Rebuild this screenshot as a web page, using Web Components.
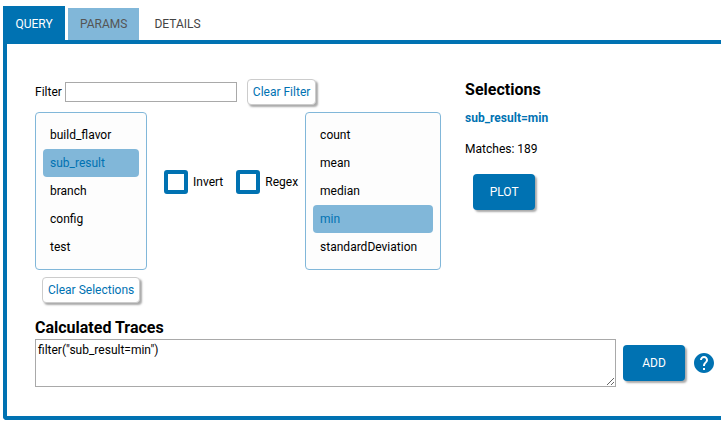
<!DOCTYPE html>
<html lang="en">
<head>
<meta charset="utf-8">
<title>Query</title>
<style>
  :root { --primary: #0072b2; --light: #81b7d9; --outline: #a9a9a9; }
  body { margin: 0; padding: 6px 0 0 3px; background: #fff; color: #000; font: 12px/16px Roboto, "Liberation Sans", sans-serif; }
</style>
</head>
<body>
<query-dialog></query-dialog>

<script>
  const define = (name, html, setup) => {
    const template = document.createElement('template');
    template.innerHTML = '<style>*,*::before{box-sizing:border-box}:host{display:block;box-sizing:border-box}</style>' + html;
    customElements.define(name, class extends HTMLElement {
      constructor() {
        super();
        this.attachShadow({ mode: 'open' }).append(template.content.cloneNode(true));
      }
      connectedCallback() { if (setup) setup(this, this.shadowRoot); }
    });
  };

  define('action-button', `
    <style>
      :host { display: inline-block; flex: none; }
      button { display: block; font: inherit; color: var(--primary); background: #fff; border: 1px solid #ccc;
        border-radius: 4px; padding: 4px 5px; height: 26px; cursor: pointer; box-shadow: 2px 2px 2px #aaa; }
      :host([primary]) button { color: #fff; background: var(--primary); border: 0; height: 36px; min-width: 62px; padding: 0 16px; }
    </style>
    <button type="button"><slot></slot></button>`);

  define('tab-bar', `
    <style>
      :host { display: flex; align-items: flex-end; gap: 3px; height: 34px; }
    </style>
    <slot></slot>`);

  define('tab-item', `
    <style>
      button { display: block; font: inherit; height: 32px; padding: 0 12px; border: 0; background: #fff; color: #444; }
      :host([near]) button { background: var(--light); color: #555; }
      :host([active]) button { height: 34px; min-width: 62px; padding-top: 2px; background: var(--primary); color: #fff; }
    </style>
    <button type="button" role="tab"><slot></slot></button>`,
    (host, root) => root.querySelector('button').setAttribute('aria-selected', host.hasAttribute('active')));

  define('filter-field', `
    <style>
      :host { display: flex; align-items: center; gap: 3px; }
      input { width: 172px; height: 20px; padding: 1px 3px; font: inherit; border: 1px solid var(--outline); background: #fff; outline: 0; }
    </style>
    <label for="filter">Filter</label><input id="filter" type="text">`);

  define('check-field', `
    <style>
      label { display: flex; align-items: center; gap: 5px; }
      input { appearance: none; margin: 0; width: 24px; height: 24px; border: 4px solid var(--primary); border-radius: 3px; background: #fff; }
      input:checked { background: var(--light); }
    </style>
    <label><input type="checkbox"><slot></slot></label>`);

  define('select-list', `
    <style>
      :host { border: 1px solid var(--light); border-radius: 4px; padding: 8px 7px; background: #fdfdfd; }
    </style>
    <slot></slot>`, host => host.setAttribute('role', 'listbox'));

  define('list-option', `
    <style>
      :host { padding: 6px 7px; border-radius: 4px; cursor: pointer; }
      :host([selected]) { background: var(--light); color: var(--primary); }
    </style>
    <slot></slot>`, host => {
      host.setAttribute('role', 'option');
      host.setAttribute('aria-selected', host.hasAttribute('selected'));
    });

  define('query-picker', `
    <style>
      .filter { display: flex; align-items: center; gap: 10px; }
      .lists { display: flex; align-items: stretch; margin: 7px 0; }
      .keys { width: 112px; }
      .values { width: 136px; }
      .checks { display: flex; align-items: center; gap: 13px; padding: 0 7px 18px 17px; }
      .clear { padding-left: 7px; }
    </style>
    <div class="filter"><filter-field></filter-field><action-button>Clear Filter</action-button></div>
    <div class="lists">
      <select-list class="keys" aria-label="Keys">
        <list-option>build_flavor</list-option>
        <list-option selected>sub_result</list-option>
        <list-option>branch</list-option>
        <list-option>config</list-option>
        <list-option>test</list-option>
      </select-list>
      <div class="checks"><check-field>Invert</check-field><check-field>Regex</check-field></div>
      <select-list class="values" aria-label="Values">
        <list-option>count</list-option>
        <list-option>mean</list-option>
        <list-option>median</list-option>
        <list-option selected>min</list-option>
        <list-option>standardDeviation</list-option>
      </select-list>
    </div>
    <div class="clear"><action-button>Clear Selections</action-button></div>`);

  define('selection-summary', `
    <style>
      h3 { margin: 0; padding: 1px 0 10px; font-size: 16px; line-height: 20px; font-weight: 700; }
      .query { color: var(--primary); font-weight: 700; margin-bottom: 15px; }
      .matches { margin-bottom: 17px; }
      action-button { margin-left: 8px; }
    </style>
    <h3>Selections</h3>
    <div class="query">sub_result=min</div>
    <div class="matches">Matches: 189</div>
    <action-button primary>PLOT</action-button>`);

  define('help-link', `
    <style>
      a { display: block; width: 24px; height: 24px; color: var(--primary); }
      svg { display: block; }
    </style>
    <a href="#help" aria-label="Help"><svg width="24" height="24" viewBox="0 0 24 24" fill="currentColor"><path d="M12 2C6.48 2 2 6.48 2 12s4.48 10 10 10 10-4.480 10-10S17.520 2 12 2zm1 17h-2v-2h2v2zm2.070-7.750l-.9.920C13.450 12.900 13 13.500 13 15h-2v-.5c0-1.100.45-2.100 1.170-2.830l1.240-1.260c.37-.36.59-.86.59-1.410 0-1.100-.9-2-2-2s-2 .9-2 2H8c0-2.210 1.790-4 4-4s4 1.790 4 4c0 .88-.36 1.680-.93 2.250z"/></svg></a>`);

  define('trace-editor', `
    <style>
      label { display: block; font-size: 16px; line-height: 20px; font-weight: 700; margin-bottom: 1px; }
      .row { display: flex; align-items: center; gap: 7px; }
      textarea { flex: 1; min-width: 0; height: 48px; margin: 0; padding: 2px; font: inherit; color: inherit; border: 1px solid var(--outline); border-radius: 0; outline: 0; resize: both; background: #fff; }
    </style>
    <label for="formula">Calculated Traces</label>
    <div class="row">
      <textarea id="formula" spellcheck="false">filter("sub_result=min")</textarea>
      <action-button primary>ADD</action-button>
      <help-link></help-link>
    </div>`);

  define('query-dialog', `
    <style>
      section { border: 4px solid var(--primary); border-right: 0; border-radius: 0 0 0 4px; padding: 35px 5px 29px 28px; }
      .top { display: flex; gap: 24px; margin-bottom: 15px; }
    </style>
    <tab-bar role="tablist">
      <tab-item active>QUERY</tab-item>
      <tab-item near>PARAMS</tab-item>
      <tab-item>DETAILS</tab-item>
    </tab-bar>
    <section>
      <div class="top"><query-picker></query-picker><selection-summary></selection-summary></div>
      <trace-editor></trace-editor>
    </section>`);
</script>
</body>
</html>
